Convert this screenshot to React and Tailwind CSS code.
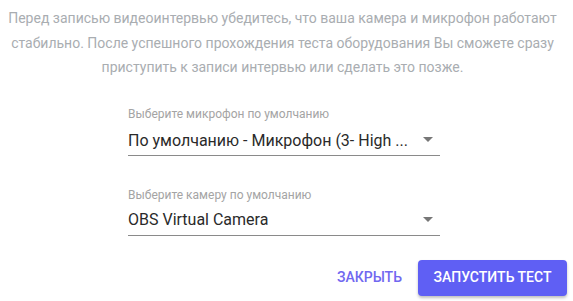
export default function App() {
  return (
    <div className="w-[573px] h-[301px] bg-white relative overflow-hidden" style={{ fontFamily: "Roboto, sans-serif" }}>
      <p className="pt-[6px] text-center text-[14px] leading-[24.5px] text-[#a9adb1] pl-[0px] pr-[8px]">
        Перед записью видеоинтервью убедитесь, что ваша камера и микрофон работают стабильно. После успешного прохождения теста оборудования Вы сможете сразу приступить к записи интервью или сделать это позже.
      </p>
      <div className="ml-[128px] w-[312px] mt-[27px]">
        <div className="text-[12px] leading-[14px] text-[#a4a4a4]">Выберите микрофон по умолчанию</div>
        <div className="flex items-end justify-between border-b border-[#8a8a8a] h-[35px] pb-[5px]">
          <span className="text-[16px] leading-[19px] text-[#2a2a2a]">По умолчанию - Микрофон (3- High ...</span>
          <span className="mr-[7px] mb-[8px] w-0 h-0 border-l-[5px] border-r-[5px] border-t-[5px] border-l-transparent border-r-transparent border-t-[#777]" />
        </div>
        <div className="text-[12px] leading-[14px] text-[#a4a4a4] mt-[32px]">Выберите камеру по умолчанию</div>
        <div className="flex items-end justify-between border-b border-[#8a8a8a] h-[34px] pb-[6px]">
          <span className="text-[16px] leading-[19px] text-[#2a2a2a]">OBS Virtual Camera</span>
          <span className="mr-[7px] mb-[7px] w-0 h-0 border-l-[5px] border-r-[5px] border-t-[5px] border-l-transparent border-r-transparent border-t-[#777]" />
        </div>
      </div>
      <div className="flex justify-end items-center gap-[16px] pr-[6px] mt-[24px]">
        <button className="text-[14px] font-medium text-[#7168f0]">ЗАКРЫТЬ</button>
        <button className="h-[36px] w-[149px] rounded-[4px] bg-[#5f5ff4] text-white text-[14px] font-medium shadow-[0_2px_3px_rgba(0,0,0,0.25)]">ЗАПУСТИТЬ ТЕСТ</button>
      </div>
    </div>
  );
}
